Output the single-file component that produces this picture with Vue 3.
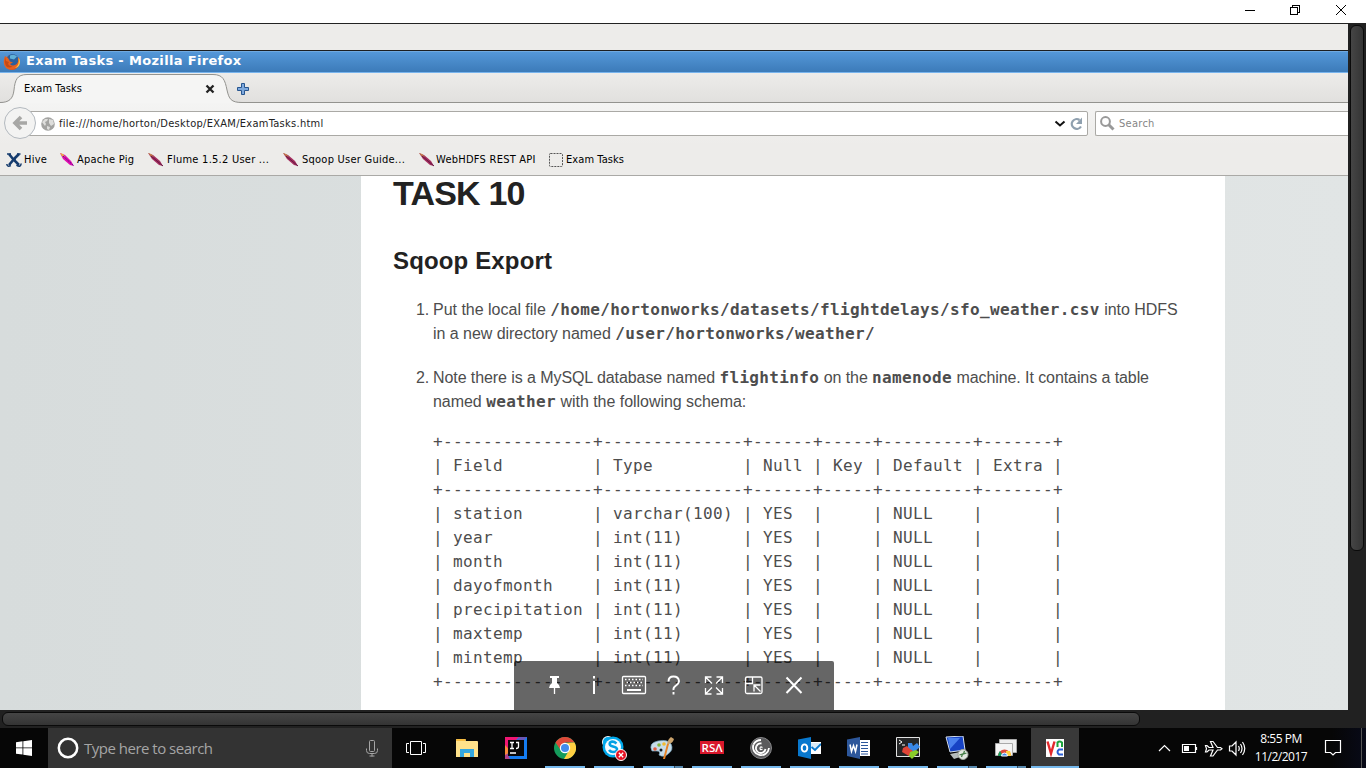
<script setup>
const rule = '+---------------+--------------+------+-----+---------+-------+'
const row = (a, b, c, d, e, f) =>
  `| ${a.padEnd(13)} | ${b.padEnd(12)} | ${c.padEnd(4)} | ${d.padEnd(3)} | ${e.padEnd(7)} | ${f.padEnd(5)} |`
const fields = ['year', 'month', 'dayofmonth', 'precipitation', 'maxtemp', 'mintemp']
const schema = [
  rule,
  row('Field', 'Type', 'Null', 'Key', 'Default', 'Extra'),
  rule,
  row('station', 'varchar(100)', 'YES', '', 'NULL', ''),
  ...fields.map((f) => row(f, 'int(11)', 'YES', '', 'NULL', '')),
  rule,
].join('\n')
</script>

<template>
  <div class="screen">
    <header class="winbar">
      <svg width="116" height="23" viewBox="0 0 116 23" fill="none" stroke="#000" shape-rendering="crispEdges">
        <path d="M0 10.500h10M45.500 7.500h7v7h-7zM47.500 7v-1.500h7v7H53" />
        <path d="M91 5l10 10M101 5L91 15" shape-rendering="auto" />
      </svg>
    </header>
    <div class="viewer">
      <div class="remote">
        <div class="strip"></div>
        <div class="title">
          <svg width="18" height="18" viewBox="0 0 18 18">
            <circle cx="9" cy="9.500" r="7.500" fill="#d9531e" />
            <circle cx="9.500" cy="7" r="6" fill="#2b5f9d" />
            <path d="M7 2.500q4-2 7 1l-3 3-4-1z" fill="#5fb0d8" />
            <path d="M2 3q-3 8 1 12 5 3 10 0 4-3 3.500-9l-1.500-2q1 7-3 8-3 1.500-5-1l3-1.500-3-1q-1-2-2-3.500z" fill="#e6601f" />
            <path d="M15.500 5q1.500 7-3.500 10 5-1 5-6 0-3-1.500-4z" fill="#ffc846" />
            <path d="M2 4l1 4 3 1-1 2q2 3 5 2-4 3-7 0Q1 9 2 4" fill="#c24a18" />
          </svg>
          <span>Exam Tasks - Mozilla Firefox</span>
        </div>
        <div class="tabs">
          <svg class="tabshape" width="250" height="30" viewBox="0 0 250 30">
            <path d="M0 29.500C9 29.500 13 26 14 17C15 7 17 2 27 2H213C223 2 225 7 227 17C229 26 231 29.500 242 29.500V30H0z" fill="#f5f5f4" />
            <path d="M0 29.500C9 29.500 13 26 14 17C15 7 17 1.500 27 1.500H213C223 1.500 225 7 227 17C229 26 231 29.500 242 29.500H250" fill="none" stroke="#93938f" />
          </svg>
          <span class="tabname">Exam Tasks</span>
          <svg class="tabx" width="10" height="10" viewBox="0 0 10 10"><path d="M1.500 1.500l7 7M8.500 1.500l-7 7" stroke="#222" stroke-width="2.300" /></svg>
          <svg class="plus" width="14" height="14" viewBox="0 0 14 14"><path d="M5.500 1.500h3v4h4v3h-4v4h-3v-4h-4v-3h4z" fill="#7ea9dd" stroke="#28568f" /></svg>
        </div>
        <div class="nav">
          <div class="url">
            <svg width="14" height="14" viewBox="0 0 14 14"><circle cx="7" cy="7" r="6.800" fill="#a3a3a1" /><path d="M1 5l3-3 3 0-1 2-2 1 1 2-1 2zM8 2l4 1 1 4-3 2-2-3zM6 9l3 1-1 3-2-1z" fill="#dededc" /></svg>
            <span>file:///home/horton/Desktop/EXAM/ExamTasks.html</span>
            <svg class="drop" width="34" height="16" viewBox="0 0 34 16"><path d="M2.500 5.500l4.500 4 4.500-4" fill="none" stroke="#111" stroke-width="2" /><path d="M26.500 4A5 4.800 0 1 0 28 10.500" fill="none" stroke="#8fa0af" stroke-width="2.200" /><path d="M29 1.500v6.500h-6z" fill="#8fa0af" /></svg>
          </div>
          <div class="find">
            <svg width="15" height="16" viewBox="0 0 15 16" fill="none" stroke="#999"><circle cx="5.500" cy="5.500" r="4.400" stroke-width="2" /><path d="M8.500 8.500l5 5" stroke-width="3" /></svg>
            <span>Search</span>
          </div>
          <svg class="back" width="34" height="34" viewBox="0 0 34 34"><circle cx="17" cy="17" r="15.500" fill="#f3f3f2" stroke="#b3b9bf" /><path d="M24 17H12.500M18 11L12 17l6 6" fill="none" stroke="#a7a7a5" stroke-width="3.600" /></svg>
        </div>
        <div class="marks">
          <span class="mark hive"><svg width="16" height="16" viewBox="0 0 16 16" fill="none" stroke="#153b6d"><path d="M3 2l4 5 6 6M13 2L9 6 3 13" stroke-width="2.600" /><path d="M1 2h4M11 2h3.500M6 7h4M.8 12q.5 3.500 4 1.500M10.500 13q4 3 4.700-1.500" stroke-width="1.600" /></svg>Hive</span>
          <span class="mark pig"><svg width="16" height="16" viewBox="0 0 16 16"><path d="M1 1l5 2 6 6 3 5-4-1-7-6z" fill="#e00bae" /><path d="M1 1l3 1 2 3-3-1z" fill="#ecae3a" /><path d="M4 4l11 10" stroke="#5a168c" stroke-dasharray="2 1" /></svg>Apache Pig</span>
          <span class="mark flume"><svg width="16" height="16" viewBox="0 0 16 16"><path d="M0 1l5 2 7 6 3 5-4-1-7-6z" fill="#a42c5d" /><path d="M0 1l3 1 3 3-3-1z" fill="#c58343" /><path d="M3 4l12 10" stroke="#631944" /></svg>Flume 1.5.2 User ...</span>
          <span class="mark sqoop"><svg width="16" height="16" viewBox="0 0 16 16"><path d="M0 1l5 2 7 6 3 5-4-1-7-6z" fill="#a42c5d" /><path d="M0 1l3 1 3 3-3-1z" fill="#c58343" /><path d="M3 4l12 10" stroke="#631944" /></svg>Sqoop User Guide...</span>
          <span class="mark hdfs"><svg width="16" height="16" viewBox="0 0 16 16"><path d="M0 1l5 2 7 6 3 5-4-1-7-6z" fill="#a42c5d" /><path d="M0 1l3 1 3 3-3-1z" fill="#c58343" /><path d="M3 4l12 10" stroke="#631944" /></svg>WebHDFS REST API</span>
          <span class="mark exam"><svg width="14" height="14" viewBox="0 0 14 14"><rect x=".5" y=".5" width="13" height="13" rx="1" fill="none" stroke="#555" stroke-dasharray="2 1" /></svg>Exam Tasks</span>
        </div>
        <main class="desk">
          <article class="sheet">
            <h1>TASK 10</h1>
            <h2>Sqoop Export</h2>
            <div class="item"><b class="num">1.</b><p><span class="wide">Put the local file </span><code>/home/hortonworks/datasets/flightdelays/sfo_weather.csv</code> into HDFS<br />in a new directory named <code>/user/hortonworks/weather/</code></p></div>
            <div class="item"><b class="num">2.</b><p><span class="tight">Note there is a MySQL database named </span><code>flightinfo</code><span class="tight"> on the </span><code>namenode</code><span class="tight"> machine. It contains a table</span><br />named <code>weather</code><span> with the following schema:</span></p></div>
            <pre>{{ schema }}</pre>
          </article>
        </main>
        <div class="overlay">
          <svg width="320" height="49" viewBox="0 0 320 49" fill="none" stroke="#fff" stroke-width="1.300">
            <path d="M36 15h9v2h-2v5q3 2 3 5H35q0-3 3-5v-5h-2z" fill="#fff" stroke="none" /><path d="M40.500 27v6" />
            <path d="M80 20v13M80 15v2.500" stroke-width="2" />
            <rect x="108.500" y="15.500" width="23" height="17" rx="1" /><path d="M111 18.500h18M112.500 21.500h16M111 24.500h18" stroke-dasharray="1.500 2" /><path d="M113 29h14" stroke-width="2" />
            <path d="M154.500 20.500q0-5 5-5t5.500 4.500q0 2.500-3 4.500t-2.500 4.500M159.500 31v2.500" stroke-width="1.900" />
            <path d="M191.500 22v-6h6m-6 0l6.500 6.500M202.500 16h6v6m0-6l-6.500 6.500M191.500 27v6h6m-6 0l6.500-6.500M202.500 33h6v-6m0 6l-6.500-6.500" />
            <path d="M231.500 17.500q0-1.500 1.500-1.500h13.500q1.500 0 1.500 1.500v13.500q0 1.500-1.500 1.500H233q-1.500 0-1.500-1.500zM232 22.500h6.500v-6M240 30.500v-6.500h6.500M240.500 24.500l6 6" />
            <path d="M272.500 16.500l15 15.500M287.500 16.500l-15 15.500" stroke-width="2" />
          </svg>
        </div>
      </div>
      <div class="vbar"><i></i></div>
      <div class="hbar"><i></i></div>
    </div>
    <footer class="taskbar">
      <div class="start"><svg width="16" height="16" viewBox="0 0 16 16" fill="#fff"><path d="M0 2.200l6.500-.9v6.200H0zM7.300 1.200L16 0v7.500H7.300zM0 8.300h6.500v6.300L0 13.700zM7.300 8.300H16V16l-8.700-1.200z" /></svg></div>
      <div class="search">
        <svg width="22" height="22" viewBox="0 0 22 22"><circle cx="11" cy="11" r="9.200" fill="none" stroke="#fff" stroke-width="2.500" /></svg>
        <span>Type here to search</span>
        <svg class="mic" width="12" height="17" viewBox="0 0 12 17" fill="none" stroke="#a5a5a5"><rect x="3.500" y=".5" width="5" height="11" rx="1" /><path d="M.5 8.500v2q0 3 3 3h5q3 0 3-3v-2M6 13.500v3M3.500 16h5" /></svg>
      </div>
      <div class="app view"><svg width="22" height="22" viewBox="0 0 22 22" fill="none" stroke="#fff"><path d="M5.500 4.500h11v13h-11zM4 6.500H1.500v9H4M18 6.500h2.500v9H18" /></svg></div>
      <div class="app"><svg width="22" height="22" viewBox="0 0 22 22"><path d="M0 3q0-1 1-1h8l1 2h11q1 0 1 1v15H0z" fill="#ffe28b" /><path d="M0 4h9l1-2H1Q0 2 0 4" fill="#f7bd42" /><path d="M4 20v-8h14v8h-4v-4H8v4z" fill="#34a7df" /></svg></div>
      <div class="app"><svg width="22" height="22" viewBox="0 0 22 22"><path d="M0 0h22v22H0z" fill="#147cf0" /><path d="M0 0h14L0 15z" fill="#ef1673" /><path d="M14 0h8L10 12z" fill="#6a55b4" /><path d="M0 12l5 10H0z" fill="#b0408a" /><path d="M0 8l6 7-6 3z" fill="#fa8b38" /><path d="M3 3h16v16H3z" fill="#080808" /><path d="M5 5.500h4M7 6v5M5 11.500h4M11 5.500h2.500v4q0 2-2.500 2M5 16h6" fill="none" stroke="#fff" stroke-width="1.300" /></svg></div>
      <div class="app on"><svg width="22" height="22" viewBox="0 0 22 22"><circle cx="11" cy="11" r="11" fill="#159b5b" /><path d="M1.500 5.500A11 11 0 0 1 20.500 5.500H11L6 12z" fill="#df4939" /><path d="M20.500 5.500A11 11 0 0 1 10 22l5.500-9.500L13 6z" fill="#ffcf42" /><circle cx="11" cy="11" r="5.200" fill="#fff" /><circle cx="11" cy="11" r="4" fill="#438cec" /></svg></div>
      <div class="app on"><svg width="26" height="26" viewBox="0 0 26 26"><circle cx="7" cy="7" r="6" fill="#f5fbff" /><circle cx="12" cy="12" r="10.500" fill="#00a9ec" /><circle cx="7" cy="7" r="5" fill="#00a9ec" /><circle cx="12" cy="12" r="8" fill="#f5fbff" /><path d="M15.500 8.500q-3.500-3-6.500-1-1.500 3 3 4t4 3q0 2.500-4 2.500-2.500 0-4-2" fill="none" stroke="#00a0e4" stroke-width="2.600" /><circle cx="20" cy="20" r="5.500" fill="#e81123" stroke="#fff" /><path d="M17.800 17.800l4.400 4.400M22.200 17.800l-4.400 4.400" stroke="#fff" stroke-width="1.300" /></svg></div>
      <div class="app on multi"><svg width="25" height="24" viewBox="0 0 25 24"><path d="M2 15Q-2 7 8 5t13 3q3 6-3 10-4 4-9 1 2-4-2-4z" fill="#c7dce9" stroke="#75a5c0" stroke-width=".7" /><circle cx="5" cy="13" r="1.800" fill="#de5d40" /><circle cx="9" cy="9" r="1.800" fill="#83b740" /><circle cx="14" cy="8" r="1.800" fill="#f2ba30" /><circle cx="11" cy="14" r="1.500" fill="#101820" /><path d="M13 23l4-15h2l-4 15z" fill="#e78427" /><path d="M17 8q1-5 4-7l3 2q-1 4-5 5z" fill="#cba36c" /></svg></div>
      <div class="app on"><svg width="24" height="14" viewBox="0 0 24 14"><path d="M0 0h24v13H0z" fill="#d9182c" /><text x="1.500" y="10.500" fill="#fff" font-family="Open Sans" font-weight="600" font-size="11" textLength="21" lengthAdjust="spacingAndGlyphs">RSΛ</text></svg></div>
      <div class="app on"><svg width="22" height="22" viewBox="0 0 22 22"><circle cx="11" cy="11" r="10.500" fill="#5a5a5c" stroke="#858587" /><g fill="none" stroke="#fff" stroke-width="1.800"><path d="M3.500 7.500A8 8 0 1 0 19 11M6.500 9a4.800 4.800 0 1 0 9 3" /><path d="M3.500 7.500Q6 3 11 3M6.500 9q1.500-3 5-2.500" /><path d="M12.500 10.500q-2.500-1.500-2.500.8t2.500.8" stroke-width="1.200" /></g></svg></div>
      <div class="app on"><svg width="23" height="22" viewBox="0 0 23 22"><path d="M13 5h10v12H13z" fill="#fff" /><path d="M0 2.500L13 0v22L0 19z" fill="#0878ce" /><path d="M13 6h10v1.500l-7 5-3-2.500z" fill="#d8eaf7" /><path d="M13.500 10l3.500 3 6-6" stroke="#0878ce" stroke-width="1.800" fill="none" /><ellipse cx="6.500" cy="11" rx="2.800" ry="3.600" fill="none" stroke="#fff" stroke-width="1.900" /></svg></div>
      <div class="app on"><svg width="23" height="22" viewBox="0 0 23 22"><path d="M12 3h11v16H12z" fill="#fff" /><path d="M14 5.500h7M14 8.500h7M14 11.500h7M14 14.500h7M14 17h7" stroke="#2d579b" stroke-width="1.200" /><path d="M0 2.500L13 0v22L0 19z" fill="#2d579b" /><path d="M3 7.500l1.500 7 2-6 2 6 1.500-7" stroke="#fff" stroke-width="1.500" fill="none" /></svg></div>
      <div class="app on"><svg width="26" height="24" viewBox="0 0 26 24"><path d="M1.500 1.500h23v19h-23z" fill="#242526" stroke="#e2e2e2" /><path d="M4 4l3 2-3 2M7 9h3" fill="none" stroke="#fff" /><path d="M13 7h4l1 3 4-3 3 4-6 5-6-3z" fill="#3988e7" /><path d="M8 12l4-2 3 3 3 2-4 5-7-4z" fill="#e14537" /><path d="M15 16l6-2 3 2-7 7-3-3z" fill="#8acc29" /></svg></div>
      <div class="app on multi"><svg width="24" height="24" viewBox="0 0 24 24"><path d="M1 1l17-1 2 14-15 2z" fill="#1743c5" stroke="#d4dfec" /><path d="M3 2h12L5 13z" fill="#4a81ee" /><path d="M5 18l10-2 3 4-9 3z" fill="#b5bcbc" /><circle cx="18" cy="18.500" r="5" fill="#e2e7e1" stroke="#9ca39b" /><path d="M14.500 19l3-1-1 3M21.500 17l-3 1 1-3" fill="none" stroke="#437c45" stroke-width="1.300" /></svg></div>
      <div class="app on multi"><svg width="22" height="22" viewBox="0 0 22 22"><path d="M4.500 2.500h17v13h-17z" fill="#eee" stroke="#aaa" /><path d="M.5 6.500h17v12H.5z" fill="#f5f5f5" stroke="#aaa" /><path d="M3 19a6.500 6.500 0 0 1 13 0z" fill="#df4939" /><path d="M3 19q0-3 2-5l3 5z" fill="#159b5b" /><path d="M11 14h4q1 2 1 5h-5z" fill="#ffcf42" /><path d="M6.500 19a3 3 0 0 1 6 0z" fill="#438cec" stroke="#fff" /></svg></div>
      <div class="app on active"><svg width="18" height="18" viewBox="0 0 18 18"><path d="M0 0h18v18H0z" fill="#fff" /><path d="M1.500 2.500l3.500 12 3.500-12" stroke="#e32b2e" stroke-width="2.400" fill="none" /><path d="M11.500 8V3.500q2-2 4.500 0V8" stroke="#1ca43e" stroke-width="2" fill="none" /><path d="M17 10.500h-4q-3 2.500 0 5h4" stroke="#2b5fd6" stroke-width="2" fill="none" /></svg></div>
      <div class="tray">
        <svg width="90" height="20" viewBox="0 0 90 20" fill="none" stroke="#fff" stroke-width="1.200">
          <path d="M2 13l5.500-5.500L13 13" /><path d="M25.500 6.500h13v8h-13zM39.500 9v3" /><path d="M27 8h5v5h-5z" fill="#fff" stroke="none" />
          <path d="M48.500 7.500h1.500l2 2h4l-2.500-6h2.500l4.500 6h3l1.500 1.300-1.500 1.200h-3l-4.500 6h-2.500l2.500-6h-4l-2 2h-1.500l1-3.200z" />
          <path d="M72.500 8h2.500l4-4v13l-4-4h-2.500zM81.500 8q1.500 2.500 0 5M83.500 6q3 4.500 0 9M85.500 4q4.500 6.500 0 13" />
        </svg>
        <div class="clock"><span>8:55 PM</span><span>11/2/2017</span></div>
        <svg class="note" width="18" height="18" viewBox="0 0 18 18" fill="none" stroke="#fff" stroke-width="1.200"><path d="M1.500 1.500h15v12h-5L9 16l-2.500-2.500h-5z" /></svg>
      </div>
    </footer>
  </div>
</template>

<style>
body { margin: 0; overflow: hidden; }
</style>
<style scoped>
* { box-sizing: border-box; }
svg { display: block; flex: none; }
.screen { width: 1366px; height: 768px; display: grid; grid-template-rows: 23px 705px 40px; background: #fff; font-family: "DejaVu Sans", sans-serif; overflow: hidden; }
.winbar { display: flex; justify-content: flex-end; padding-right: 5px; }
.viewer { display: grid; grid-template-columns: 1348px 18px; grid-template-rows: 687px 18px; background: #212121; }
.remote { display: flex; flex-direction: column; border-top: 1px solid #222; position: relative; overflow: hidden; background: #edecea; }
.strip { height: 27px; flex: none; border-bottom: 1px solid #1c1e20; }
.title { height: 22px; flex: none; display: flex; align-items: center; gap: 5px; padding-left: 3px; background: linear-gradient(#5497d8, #3c7bb9); border-top: 1px solid #6fa9e0; border-bottom: 1px solid #78b4ed; color: #fff; font-weight: 700; font-size: 13px; line-height: 18px; white-space: nowrap; }
.title span { letter-spacing: .33px; position: relative; top: -1px; }
.tabs { height: 30px; flex: none; position: relative; display: flex; align-items: center; background: linear-gradient(#edecea, #e1e0de); border-bottom: 1px solid #93938f; font-family: "DejaVu Sans Condensed", "DejaVu Sans", sans-serif; font-size: 11px; letter-spacing: .08px; }
.tabshape { position: absolute; left: 0; top: 0; }
.tabname { position: relative; margin-left: 24px; padding-top: 2px; width: 181px; }
.tabx, .plus { position: relative; top: 1px; }
.plus { margin-left: 21px; }
.nav { height: 41px; flex: none; position: relative; display: flex; gap: 7px; padding: 8px 0 8px 20px; background: linear-gradient(#f4f4f3, #edecea); font-size: 11px; font-family: "DejaVu Sans Condensed", "DejaVu Sans", sans-serif; color: #222; letter-spacing: .28px; }
.back { position: absolute; left: 3px; top: 3px; }
.url, .find { height: 25px; display: flex; align-items: center; background: #fff; border: 1px solid #aaa9a5; border-radius: 2px; white-space: nowrap; }
.url { width: 1068px; padding-left: 20px; gap: 4px; }
.drop { margin-left: auto; }
.find { flex: 1; border-right: 0; border-radius: 2px 0 0 2px; padding-left: 4px; gap: 4px; color: #858585; }
.marks { height: 32px; flex: none; display: flex; align-items: center; border-bottom: 1px solid #aaa9a6; font-family: "DejaVu Sans Condensed", "DejaVu Sans", sans-serif; font-size: 11px; letter-spacing: .25px; color: #000; white-space: nowrap; padding-left: 6px; line-height: 15px; }
.mark { display: flex; align-items: center; gap: 2px; flex: none; }
.hive { width: 53px; } .pig { width: 89px; } .flume { width: 135px; gap: 3px; } .sqoop { width: 136px; gap: 3px; } .hdfs { width: 130px; gap: 1px; } .exam { gap: 3px; letter-spacing: .08px; }
.desk { height: 534px; flex: none; overflow: hidden; background: linear-gradient(90deg, #d7dcdc, #e1e5e5); }
.sheet { margin-left: 361px; width: 864px; height: 534px; background: #fff; padding: 0 32px; color: #4d4d4d; font: 16px/24px "Liberation Sans", Arial, sans-serif; }
h1, h2 { margin: 0; color: #222; font-weight: 700; white-space: nowrap; }
h1 { font-size: 34px; line-height: 34px; letter-spacing: -.8px; height: 67px; }
h2 { font-size: 24px; line-height: 36px; height: 55px; letter-spacing: .15px; }
.item { display: flex; height: 68px; margin-left: 23px; }
.num { font-weight: 400; width: 17px; letter-spacing: -.1px; flex: none; }
p { margin: 0; white-space: pre; letter-spacing: -.04px; }
.wide { letter-spacing: -.01px; }
.tight { letter-spacing: -.08px; }
code { font: 700 16px/20px "DejaVu Sans Mono", monospace; letter-spacing: .36px; }
pre { margin: -4px 0 0 40px; font: 16px/24px "DejaVu Sans Mono", monospace; letter-spacing: .368px; }
.overlay { position: absolute; left: 514px; top: 637px; width: 320px; height: 49px; background: rgba(0, 0, 0, .6); border-radius: 2px 2px 0 0; }
.vbar { background: #212121; padding: 2px 2px 0; }
.vbar i { display: block; width: 14px; height: 526px; border: 1px solid #0a0a0a; border-radius: 6px; background: linear-gradient(90deg, #454545, #343434); }
.hbar { grid-column: 1 / 3; padding: 2px; }
.hbar i { display: block; width: 1138px; height: 14px; border: 1px solid #0a0a0a; border-radius: 6px; background: linear-gradient(#454545, #343434); }
.taskbar { display: flex; background: #060606; color: #fff; }
.start { width: 48px; display: flex; align-items: center; justify-content: center; }
.search { width: 344px; display: flex; align-items: center; background: #333; padding: 0 14px 0 9px; color: #a5a5a5; font: 15px "Open Sans", sans-serif; }
.search span { margin-left: 5px; white-space: nowrap; letter-spacing: -.5px; }
.mic { margin-left: auto; }
.app { width: 49px; flex: none; position: relative; display: flex; align-items: center; justify-content: center; padding-right: 2px; }
.view { width: 51px; padding-right: 3px; }
.on::after { content: ""; position: absolute; left: 4px; bottom: 0; width: 40px; height: 2px; background: #76b9ed; }
.multi::after { background: linear-gradient(90deg, #76b9ed 31px, #344b5e 31px, #344b5e 32px, #5889ae 32px); }
.active { background: #393939; width: 48px; padding-right: 0; }
.active::after { left: 0; width: 48px; }
.tray { margin-left: auto; width: 209px; display: flex; align-items: center; position: relative; background: linear-gradient(90deg, #060606 175px, #080a18); }
.tray::after { content: ""; position: absolute; right: 4px; top: 0; width: 1px; height: 40px; background: #555; }
.clock { width: 76px; margin-left: -4px; display: flex; flex-direction: column; align-items: center; font: 12px/18px "Open Sans", sans-serif; letter-spacing: -.5px; white-space: nowrap; }
.note { margin-left: 5px; }
</style>
